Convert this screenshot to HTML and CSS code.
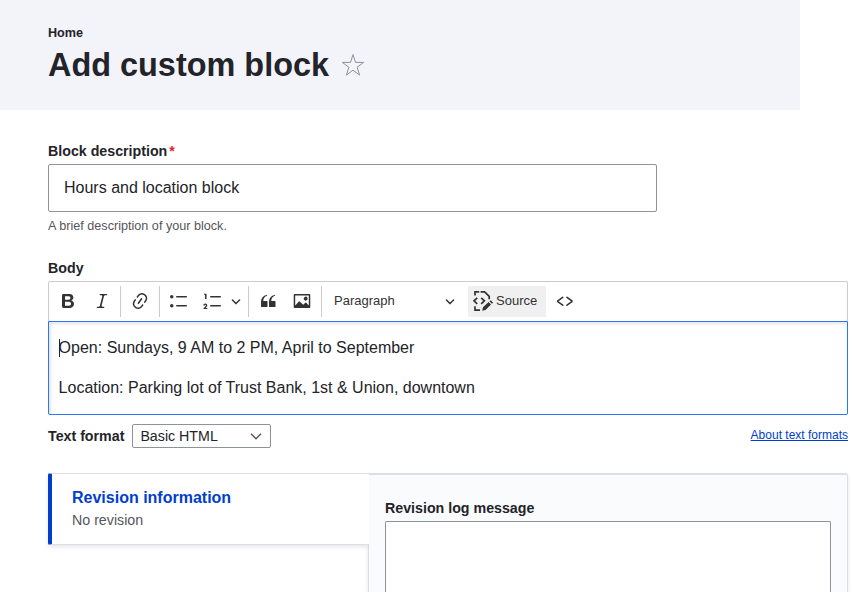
FILE: index.html
```html
<!DOCTYPE html>
<html lang="en">
<head>
<meta charset="utf-8">
<title>Add custom block</title>
<link rel="stylesheet" href="styles.css">
</head>
<body>
<header class="page-header">
  <a class="breadcrumb">Home</a>
  <div class="title-row">
    <h1>Add custom block</h1>
    <svg class="star" viewBox="0 0 24 24"><path d="M12 1.6l2.5 7.8h8.2l-6.6 4.8 2.5 7.9-6.6-4.9-6.6 4.9 2.5-7.9-6.6-4.8h8.2z"/></svg>
  </div>
</header>
<main>
  <label class="label">Block description<span class="required">*</span></label>
  <div class="text-input">Hours and location block</div>
  <p class="description">A brief description of your block.</p>

  <label class="label body-label">Body</label>
  <div class="toolbar">
    <span class="tool"><svg viewBox="0 0 20 20"><path d="M10.187 17H5.773c-.637 0-1.092-.138-1.364-.415-.273-.277-.409-.718-.409-1.323V4.738c0-.617.14-1.062.419-1.332.279-.27.73-.406 1.354-.406h4.68c.69 0 1.288.041 1.793.124.506.083.96.242 1.36.478.341.197.644.447.906.75a3.262 3.262 0 0 1 .808 2.162c0 1.401-.722 2.426-2.167 3.075C15.05 10.175 16 11.315 16 13.01a3.756 3.756 0 0 1-2.296 3.504 6.1 6.1 0 0 1-1.517.377c-.571.073-1.238.11-2 .11zm-.217-6.217H7v4.087h3.069c1.977 0 2.965-.69 2.965-2.072 0-.707-.256-1.22-.768-1.537-.512-.319-1.277-.478-2.296-.478zM7 5.13v3.619h2.606c.729 0 1.292-.067 1.69-.2a1.6 1.6 0 0 0 .91-.765c.165-.267.247-.566.247-.897 0-.707-.26-1.176-.778-1.409-.519-.232-1.31-.348-2.375-.348H7z"/></svg></span>
    <span class="tool italic"><svg viewBox="0 0 20 20"><path d="m9.586 14.633.021.004c-.036.335.095.655.393.962.082.083.173.15.274.201h1.474a.6.6 0 1 1 0 1.2H5.304a.6.6 0 0 1 0-1.2h1.15c.474-.07.809-.182 1.005-.334.157-.122.291-.32.404-.597l2.416-9.55a1.053 1.053 0 0 0-.281-.823 1.12 1.12 0 0 0-.442-.296H8.15a.6.6 0 0 1 0-1.2h6.443a.6.6 0 1 1 0 1.2h-1.195c-.376.056-.65.155-.823.296-.215.175-.423.439-.623.79l-2.366 9.347z"/></svg></span>
    <span class="separator"></span>
    <span class="tool"><svg viewBox="0 0 20 20"><path d="m11.077 15 .991-1.416a.75.75 0 1 1 1.229.86l-1.148 1.64a.748.748 0 0 1-.217.206 5.251 5.251 0 0 1-8.503-5.955.741.741 0 0 1 .12-.274l1.147-1.639a.75.75 0 1 1 1.228.86L4.933 10.7l.006.003a3.75 3.75 0 0 0 6.132 4.294l.006.004zm5.494-5.335a.748.748 0 0 1-.12.274l-1.147 1.639a.75.75 0 1 1-1.228-.86l.86-1.23a3.75 3.75 0 0 0-6.144-4.301l-.86 1.229a.75.75 0 0 1-1.229-.86l1.148-1.64a.748.748 0 0 1 .217-.206 5.251 5.251 0 0 1 8.503 5.955zm-4.563-2.532a.75.75 0 0 1 .184 1.045l-3.155 4.505a.75.75 0 1 1-1.229-.86l3.155-4.506a.75.75 0 0 1 1.045-.184z"/></svg></span>
    <span class="separator"></span>
    <span class="tool"><svg viewBox="0 0 20 20"><path d="M7.75 5h9.5a.75.75 0 0 1 0 1.5h-9.5a.75.75 0 0 1 0-1.5zm0 9h9.5a.75.75 0 0 1 0 1.5h-9.5a.75.75 0 0 1 0-1.5z"/><circle cx="2.75" cy="5.75" r="1.75"/><circle cx="2.75" cy="14.75" r="1.75"/></svg></span>
    <span class="tool split"><svg viewBox="0 0 20 20"><path d="M7.75 5h9.5a.75.75 0 0 1 0 1.5h-9.5a.75.75 0 0 1 0-1.5zm0 9h9.5a.75.75 0 0 1 0 1.5h-9.5a.75.75 0 0 1 0-1.5zM3.5 3v5H2V3.7H1v-1h2.5V3zM.343 17.857l2.59-3.257H2.92a.6.6 0 1 0-1.04 0H.302a2 2 0 1 1 3.995 0h-.001c-.048.405-.16.734-.333.988-.175.254-.59.692-1.244 1.312H4.3v1h-4l.043-.043z"/></svg></span>
    <span class="arrow-button"><svg class="arrow" viewBox="0 0 10 10"><path d="M.941 4.523a.75.75 0 1 1 1.06-1.06l3.006 3.005 3.005-3.005a.75.75 0 1 1 1.06 1.06l-3.549 3.55a.75.75 0 0 1-1.168-.136L.941 4.523z"/></svg></span>
    <span class="separator"></span>
    <span class="tool"><svg viewBox="0 0 20 20"><path d="M3 10.423a6.5 6.5 0 0 1 6.056-6.408l.038.67C6.448 5.423 5.354 7.663 5.22 10H9c.552 0 .5.432.5.986v4.511c0 .554-.448.503-1 .503h-5c-.552 0-.5-.449-.5-1.003v-4.574zm8 0a6.5 6.5 0 0 1 6.056-6.408l.038.67c-2.646.739-3.74 2.979-3.873 5.315H17c.552 0 .5.432.5.986v4.511c0 .554-.448.503-1 .503h-5c-.552 0-.5-.449-.5-1.003v-4.574z"/></svg></span>
    <span class="tool"><svg viewBox="0 0 20 20"><path d="M6.91 10.54c.26-.23.64-.21.88.03l3.36 3.14 2.23-2.06a.64.64 0 0 1 .87 0l2.52 2.97V4.5H3.2v10.12l3.71-4.08zm10.27-7.51c.6 0 1.09.47 1.09 1.05v11.84c0 .59-.49 1.06-1.09 1.06H2.79c-.6 0-1.09-.47-1.09-1.06V4.08c0-.58.49-1.05 1.1-1.05h14.38zm-5.22 5.56a1.96 1.96 0 1 1 3.4-1.96 1.96 1.96 0 0 1-3.4 1.96z"/></svg></span>
    <span class="separator"></span>
    <span class="heading-select">Paragraph<svg class="arrow" viewBox="0 0 10 10"><path d="M.941 4.523a.75.75 0 1 1 1.06-1.06l3.006 3.005 3.005-3.005a.75.75 0 1 1 1.06 1.06l-3.549 3.55a.75.75 0 0 1-1.168-.136L.941 4.523z"/></svg></span>
    <span class="source"><svg viewBox="0 0 20 20"><g class="line"><path d="M2 4.6V.9h4.2M7.6.9h4l4.6 4.5v2.8M2 15.2v4h5"/><path d="M4.2 6.8L1 9.8l3.2 3M8.2 6.8l3.2 3-3.2 3"/></g><path d="M9.2 19.7l.8-3.4 5.6-5.2 2.4 2.5-5.5 5.3zM16.5 10.3l1.2-1.1 2.4 2.5-1.2 1.1z"/></svg>Source</span>
    <span class="tool code"><svg viewBox="0 0 20 20"><path d="m12.5 5.7 5.2 3.9v1.3l-5.6 4c-.1.2-.3.2-.5.2-.3-.1-.6-.7-.6-1l.3-.4 4.7-3.5L11.5 7l-.2-.2c-.1-.3-.1-.6 0-.8.2-.2.5-.4.8-.4a.8.8 0 0 1 .4.1zm-5.2 0L2 9.6v1.3l5.6 4c.1.2.3.2.5.2.3-.1.7-.7.6-1 0-.1 0-.3-.2-.4l-5-3.5L8.2 7l.2-.2c.1-.3.1-.6 0-.8-.2-.2-.5-.4-.8-.4a.8.8 0 0 0-.3.1z"/></svg></span>
  </div>
  <div class="editor">
    <p class="has-caret">Open: Sundays, 9 AM to 2 PM, April to September</p>
    <p>Location: Parking lot of Trust Bank, 1st &amp; Union, downtown</p>
  </div>
  <div class="format-row">
    <label class="label">Text format</label>
    <span class="select">Basic HTML<svg viewBox="0 0 14 9"><path d="M2 1.7l5 5 5-5"/></svg></span>
    <a class="help">About text formats</a>
  </div>

  <div class="tabs">
    <div class="tab">
      <strong>Revision information</strong>
      <span>No revision</span>
    </div>
    <section class="panel">
      <label class="label">Revision log message</label>
      <div class="textarea"></div>
    </section>
  </div>
</main>
</body>
</html>
```
FILE: styles.css
```css
* { box-sizing: border-box; }
body {
  margin: 0;
  background: #fff;
  color: #232429;
  font: 16px/24px "Liberation Sans", Arial, sans-serif;
}
p, h1 { margin: 0; }
svg { display: block; flex: none; }

.page-header {
  width: 800px;
  height: 110px;
  padding: 24px 48px 0;
  background: #f3f4f9;
}
.breadcrumb {
  display: block;
  font-size: 12.64px;
  font-weight: 700;
  line-height: 18px;
}
.title-row { display: flex; align-items: center; height: 42px; margin-top: 2px; }
h1 { font-size: 32.44px; line-height: 42px; }
.star { width: 24px; height: 24px; margin-left: 12px; }
.star path { fill: none; stroke: #8e929c; stroke-width: 1; }

main { width: 800px; margin-left: 48px; padding-top: 32px; }
.label { display: block; font-size: 14.22px; line-height: 18px; font-weight: 700; }
.required { margin-left: 2px; color: #e5201f; }
.text-input {
  width: 609px;
  height: 48px;
  margin-top: 4px;
  padding: 11px 15px;
  border: 1px solid #919297;
  border-radius: 2px;
}
.description { margin-top: 6px; color: #55565b; font-size: 12.64px; line-height: 17px; }
.body-label { margin-top: 24px; }

.toolbar {
  display: flex;
  align-items: center;
  height: 40px;
  margin-top: 4px;
  padding-left: 2px;
  border: 1px solid #ccc;
  border-bottom: 0;
  border-radius: 2px 2px 0 0;
  font-size: 13px;
  color: #333;
}
.toolbar svg { width: 20px; height: 20px; fill: #333; }
.toolbar .arrow { width: 10px; height: 10px; }
.tool { display: flex; justify-content: center; width: 30px; margin: 0 2px 1px; }
.italic { margin-right: 1px; }
.separator { width: 1px; height: 31px; background: #ccc; margin: 0 2px; }
.split { margin-right: 0; }
.arrow-button { display: flex; justify-content: center; width: 18px; margin: 0 1px 1px -1px; }
.heading-select {
  display: flex;
  align-items: center;
  justify-content: space-between;
  width: 121px;
  margin: 0 13px 1px 10px;
}
.source {
  display: flex;
  align-items: center;
  gap: 3px;
  width: 78px;
  height: 31px;
  padding: 0 0 1px 5px;
  background: #f0f0f0;
}
.source .line { fill: none; stroke: #333; stroke-width: 1.7; }
.code { margin-left: 4px; }

.editor {
  height: 94px;
  padding: 14px 9.6px;
  border: 1px solid #2977ff;
  border-radius: 0 0 2px 2px;
  box-shadow: inset 2px 2px 3px rgba(0, 0, 0, 0.1);
}
.editor p + p { margin-top: 16px; }
.has-caret { position: relative; }
.has-caret::before {
  content: "";
  position: absolute;
  left: 0.4px;
  top: 3px;
  width: 1px;
  height: 18px;
  background: #232429;
}

.format-row { display: flex; align-items: center; height: 24px; margin-top: 9px; }
.select {
  display: flex;
  align-items: center;
  justify-content: space-between;
  width: 139px;
  height: 24px;
  margin-left: 8px;
  padding: 0 7px;
  border: 1px solid #8e929c;
  border-radius: 2px;
  font-size: 14.22px;
}
.select svg { width: 14px; height: 9px; }
.select path { fill: none; stroke: #55565b; stroke-width: 1.4; }
.help {
  margin: 0 0 2px auto;
  color: #003ecc;
  font-size: 12px;
  line-height: 18px;
  text-decoration: underline;
}

.tabs { display: flex; align-items: flex-start; height: 119px; margin-top: 25px; }
.tab {
  z-index: 1;
  width: 321px;
  height: 72px;
  padding: 12px 20px;
  border: solid #dedfe4;
  border-width: 1px 0 1px 4px;
  border-left-color: #003ecc;
  border-radius: 2px 0 0 2px;
  background: #fff;
  box-shadow: 0 2px 4px rgba(0, 0, 0, 0.1);
  clip-path: inset(0 0 -8px -8px);
}
.tab strong { display: block; color: #003ecc; line-height: 24px; }
.tab span { display: block; color: #55565b; font-size: 14.22px; line-height: 21px; }
.panel {
  width: 480px;
  height: 119px;
  margin-left: -1px;
  padding: 24px 16px 0;
  border: 1px solid #dedfe4;
  border-top-width: 2px;
  border-bottom: 0;
  border-radius: 0 2px 0 0;
  background: #fafbfd;
  box-shadow: 0 2px 4px rgba(0, 0, 0, 0.1);
}
.textarea {
  height: 71px;
  margin-top: 4px;
  border: 1px solid #8e929c;
  border-bottom: 0;
  border-radius: 2px 2px 0 0;
  background: #fff;
}
```
